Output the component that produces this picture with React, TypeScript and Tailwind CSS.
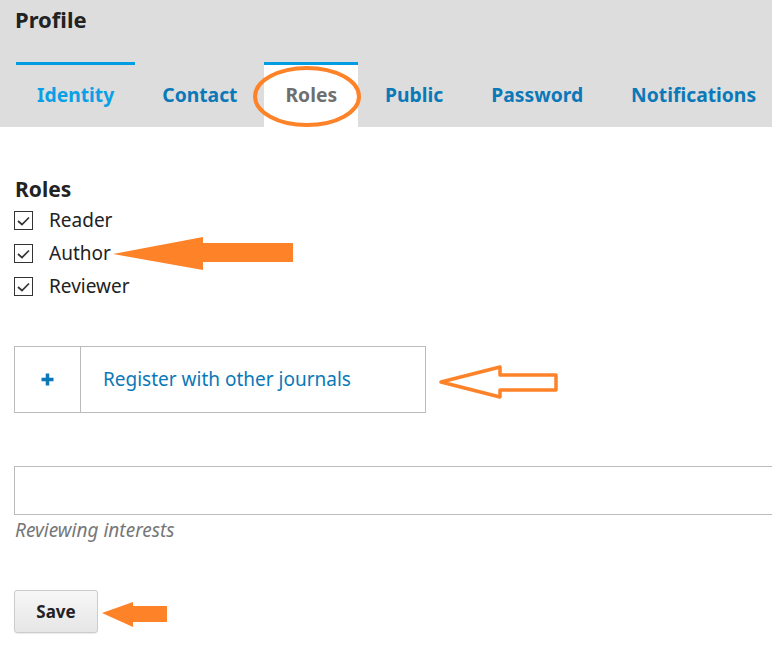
import React from "react";

const font = { fontFamily: '"Noto Sans", "Open Sans", sans-serif' };

function Check() {
  return (
    <span className="flex h-[19px] w-[19px] items-center justify-center border-[1.5px] border-[#333] bg-white">
      <svg width="13" height="10" viewBox="0 0 13 10">
        <path d="M1 5 L5 8.5 L12 1.5" fill="none" stroke="#333" strokeWidth="1.7" />
      </svg>
    </span>
  );
}

export default function App() {
  const tabs = ["Identity", "Contact", "Roles", "Public", "Password", "Notifications"];
  return (
    <div className="relative h-[649px] w-[772px] overflow-hidden bg-white" style={font}>
      <div className="flex h-[127px] flex-col bg-[#dddddd]">
        <h1 className="pl-[15px] pt-[4px] text-[22px] font-bold leading-[30px] text-[#222]">Profile</h1>
        <div className="mt-auto flex gap-[6px] pl-[16px]">
          {tabs.map((t) => {
            const active = t === "Roles";
            const first = t === "Identity";
            return (
              <div
                key={t}
                className={
                  "flex h-[65px] items-center border-t-[3px] px-[21px] pb-[2px] text-[19.3px] font-bold " +
                  (active
                    ? "border-[#009de5] bg-white text-[#6f6f6f]"
                    : first
                    ? "border-[#009de5] text-[#0aa0e6]"
                    : "border-transparent text-[#0b78b8]")
                }
              >
                {t}
              </div>
            );
          })}
        </div>
      </div>

      <div className="pl-[14px] pt-[48px]">
        <h2 className="pl-[1px] text-[21px] font-bold leading-[29px] text-[#222]">Roles</h2>
        <div className="flex flex-col">
          {["Reader", "Author", "Reviewer"].map((r) => (
            <label key={r} className="flex h-[33px] items-center gap-[16px] text-[19px] text-[#222]">
              <Check />
              <span>{r}</span>
            </label>
          ))}
        </div>

        <div className="mt-[43px] flex h-[67px] w-[412px] border border-[#bbbbbb]">
          <div className="flex w-[66px] items-center justify-center border-r border-[#bbbbbb]">
            <svg width="13" height="13" viewBox="0 0 13 13">
              <path d="M6.5 0.5 V12.5 M0.5 6.5 H12.5" stroke="#0b78b8" strokeWidth="3.5" />
            </svg>
          </div>
          <div className="flex items-center pl-[22px] text-[19px] text-[#0b78b8]">Register with other journals</div>
        </div>

        <div className="mt-[53px] h-[49px] w-[800px] border border-[#bbbbbb] bg-white" />
        <div className="pl-[1px] pt-[1px] text-[19px] italic leading-[28px] text-[#777]">Reviewing interests</div>

        <button className="mt-[46px] flex h-[43px] w-[84px] items-center justify-center rounded-[3px] border border-[#cccccc] bg-gradient-to-b from-[#f7f7f7] to-[#e6e6e6] text-[17px] font-bold text-[#222] shadow-[0_1px_1px_rgba(0,0,0,0.08)]">
          Save
        </button>
      </div>

      <svg className="pointer-events-none absolute left-0 top-0" width="772" height="649">
        <ellipse cx="307" cy="96.5" rx="52" ry="28.5" fill="none" stroke="#fd8228" strokeWidth="4" />
        <polygon points="113,254 203,237 203,243 293,243 293,262 203,262 203,270" fill="#fd8228" />
        <polygon
          points="441,382 500,367 500,375 556,375 556,390 500,390 500,397"
          fill="none"
          stroke="#fd8228"
          strokeWidth="3.5"
          strokeLinejoin="round"
        />
        <polygon points="102,613 133,602 133,606 167,606 167,622 133,622 133,627" fill="#fd8228" />
      </svg>
    </div>
  );
}
